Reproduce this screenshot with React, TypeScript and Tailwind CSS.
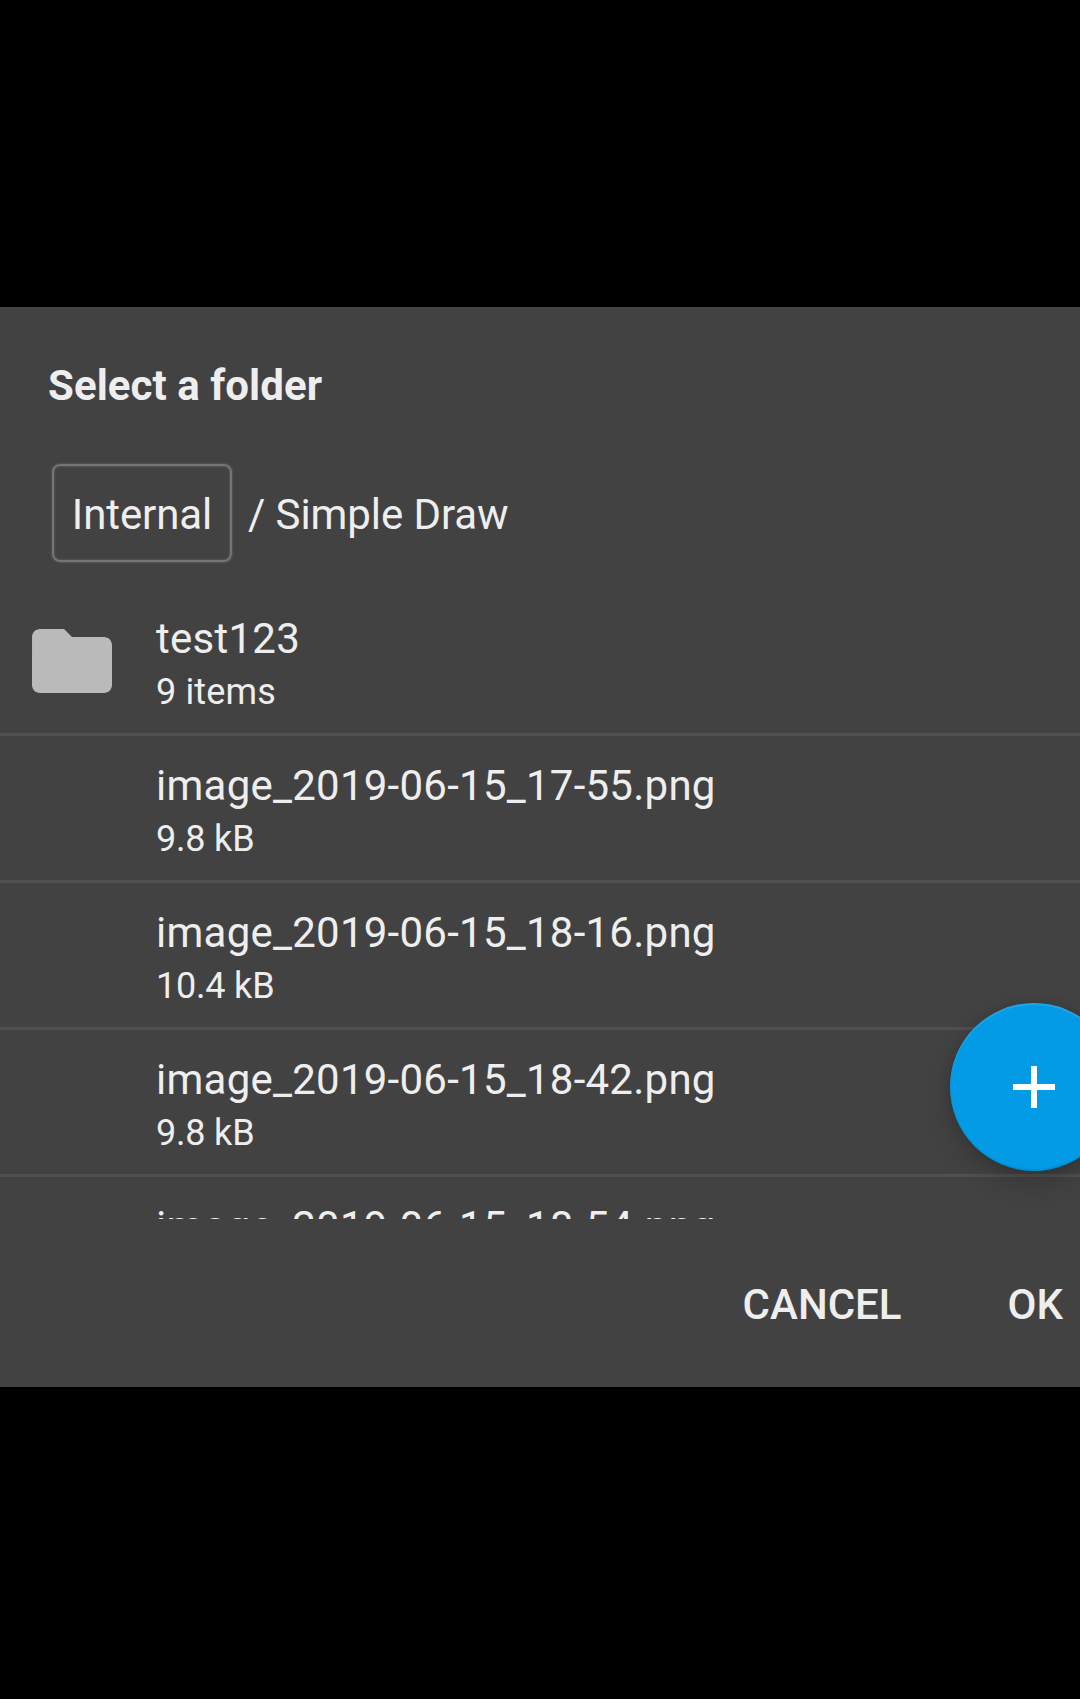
import React from "react";

const files = [
  { name: "image_2019-06-15_17-55.png", size: "9.8 kB" },
  { name: "image_2019-06-15_18-16.png", size: "10.4 kB" },
  { name: "image_2019-06-15_18-42.png", size: "9.8 kB" },
  { name: "image_2019-06-15_18-54.png", size: "9.8 kB" },
];

function Row({ name, detail, folder }: { name: string; detail: string; folder?: boolean }) {
  return (
    <div className="flex h-[147px] shrink-0 items-start border-b-[3px] border-[#505050]">
      <div className="flex h-full w-[156px] items-center pl-6">
        {folder && (
          <svg className="h-24 w-24" viewBox="0 0 24 24" fill="#bababa">
            <path d="M10 4H4c-1.1 0-1.99.9-1.99 2L2 18c0 1.1.9 2 2 2h16c1.1 0 2-.9 2-2V8c0-1.1-.9-2-2-2h-8l-2-2z" />
          </svg>
        )}
      </div>
      <div className="pt-[25px]">
        <div className="text-[42px] leading-[50px] tracking-[0.25px] whitespace-nowrap">{name}</div>
        <div className={`mt-[6px] text-[36px] leading-[44px] whitespace-nowrap ${folder ? "tracking-[0.15px]" : "tracking-[-0.2px]"}`}>{detail}</div>
      </div>
    </div>
  );
}

export default function App() {
  return (
    <div className="flex h-[1699px] w-[1080px] flex-col justify-start overflow-hidden bg-black pt-[307px] font-['Roboto',sans-serif] text-[#eeeeee]">
      <div className="relative flex h-[1080px] w-full flex-col bg-[#424242]">
        <h1 className="pt-[54px] pl-12 text-[42px] leading-[50px] font-bold tracking-[0.05px]">Select a folder</h1>
        <div className="mt-[53px] flex h-[98px] items-center pl-[52px] text-[42px]">
          <div className="mr-px flex h-full w-[180px] items-center justify-center rounded-[8px] border-2 border-[#757575] pt-[2px] tracking-[-0.1px] shadow-[0_0_2px_1px_#555555,inset_0_0_2px_1px_#555555]">Internal</div>
          <div className="pt-[2px] pl-[15px] tracking-[-0.08px]">/ Simple Draw</div>
        </div>
        <div className="mt-[27px] flex h-[630px] flex-col overflow-hidden">
          <Row name="test123" detail="9 items" folder />
          {files.map((f) => <Row key={f.name} name={f.name} detail={f.size} />)}
        </div>
        <div className="flex h-[168px] items-center justify-end gap-[106px] pt-[2px] pr-[17px] text-[42px] font-medium">
          <button>CANCEL</button>
          <button>OK</button>
        </div>
        <div className="absolute top-[656px] right-0 h-[280px] w-[180px] overflow-hidden">
          <button className="mt-[40px] ml-[50px] flex h-[168px] w-[168px] items-center justify-center rounded-full bg-[#039be5] shadow-[0_12px_26px_rgba(0,0,0,0.18),0_0_10px_rgba(0,0,0,0.1),inset_0_2px_1px_rgba(255,255,255,0.12),inset_0_-2px_1px_rgba(0,0,0,0.08)]">
            <svg className="h-[72px] w-[72px]" viewBox="0 0 24 24" fill="white"><path d="M19 13h-6v6h-2v-6H5v-2h6V5h2v6h6v2z" /></svg>
          </button>
        </div>
      </div>
    </div>
  );
}
